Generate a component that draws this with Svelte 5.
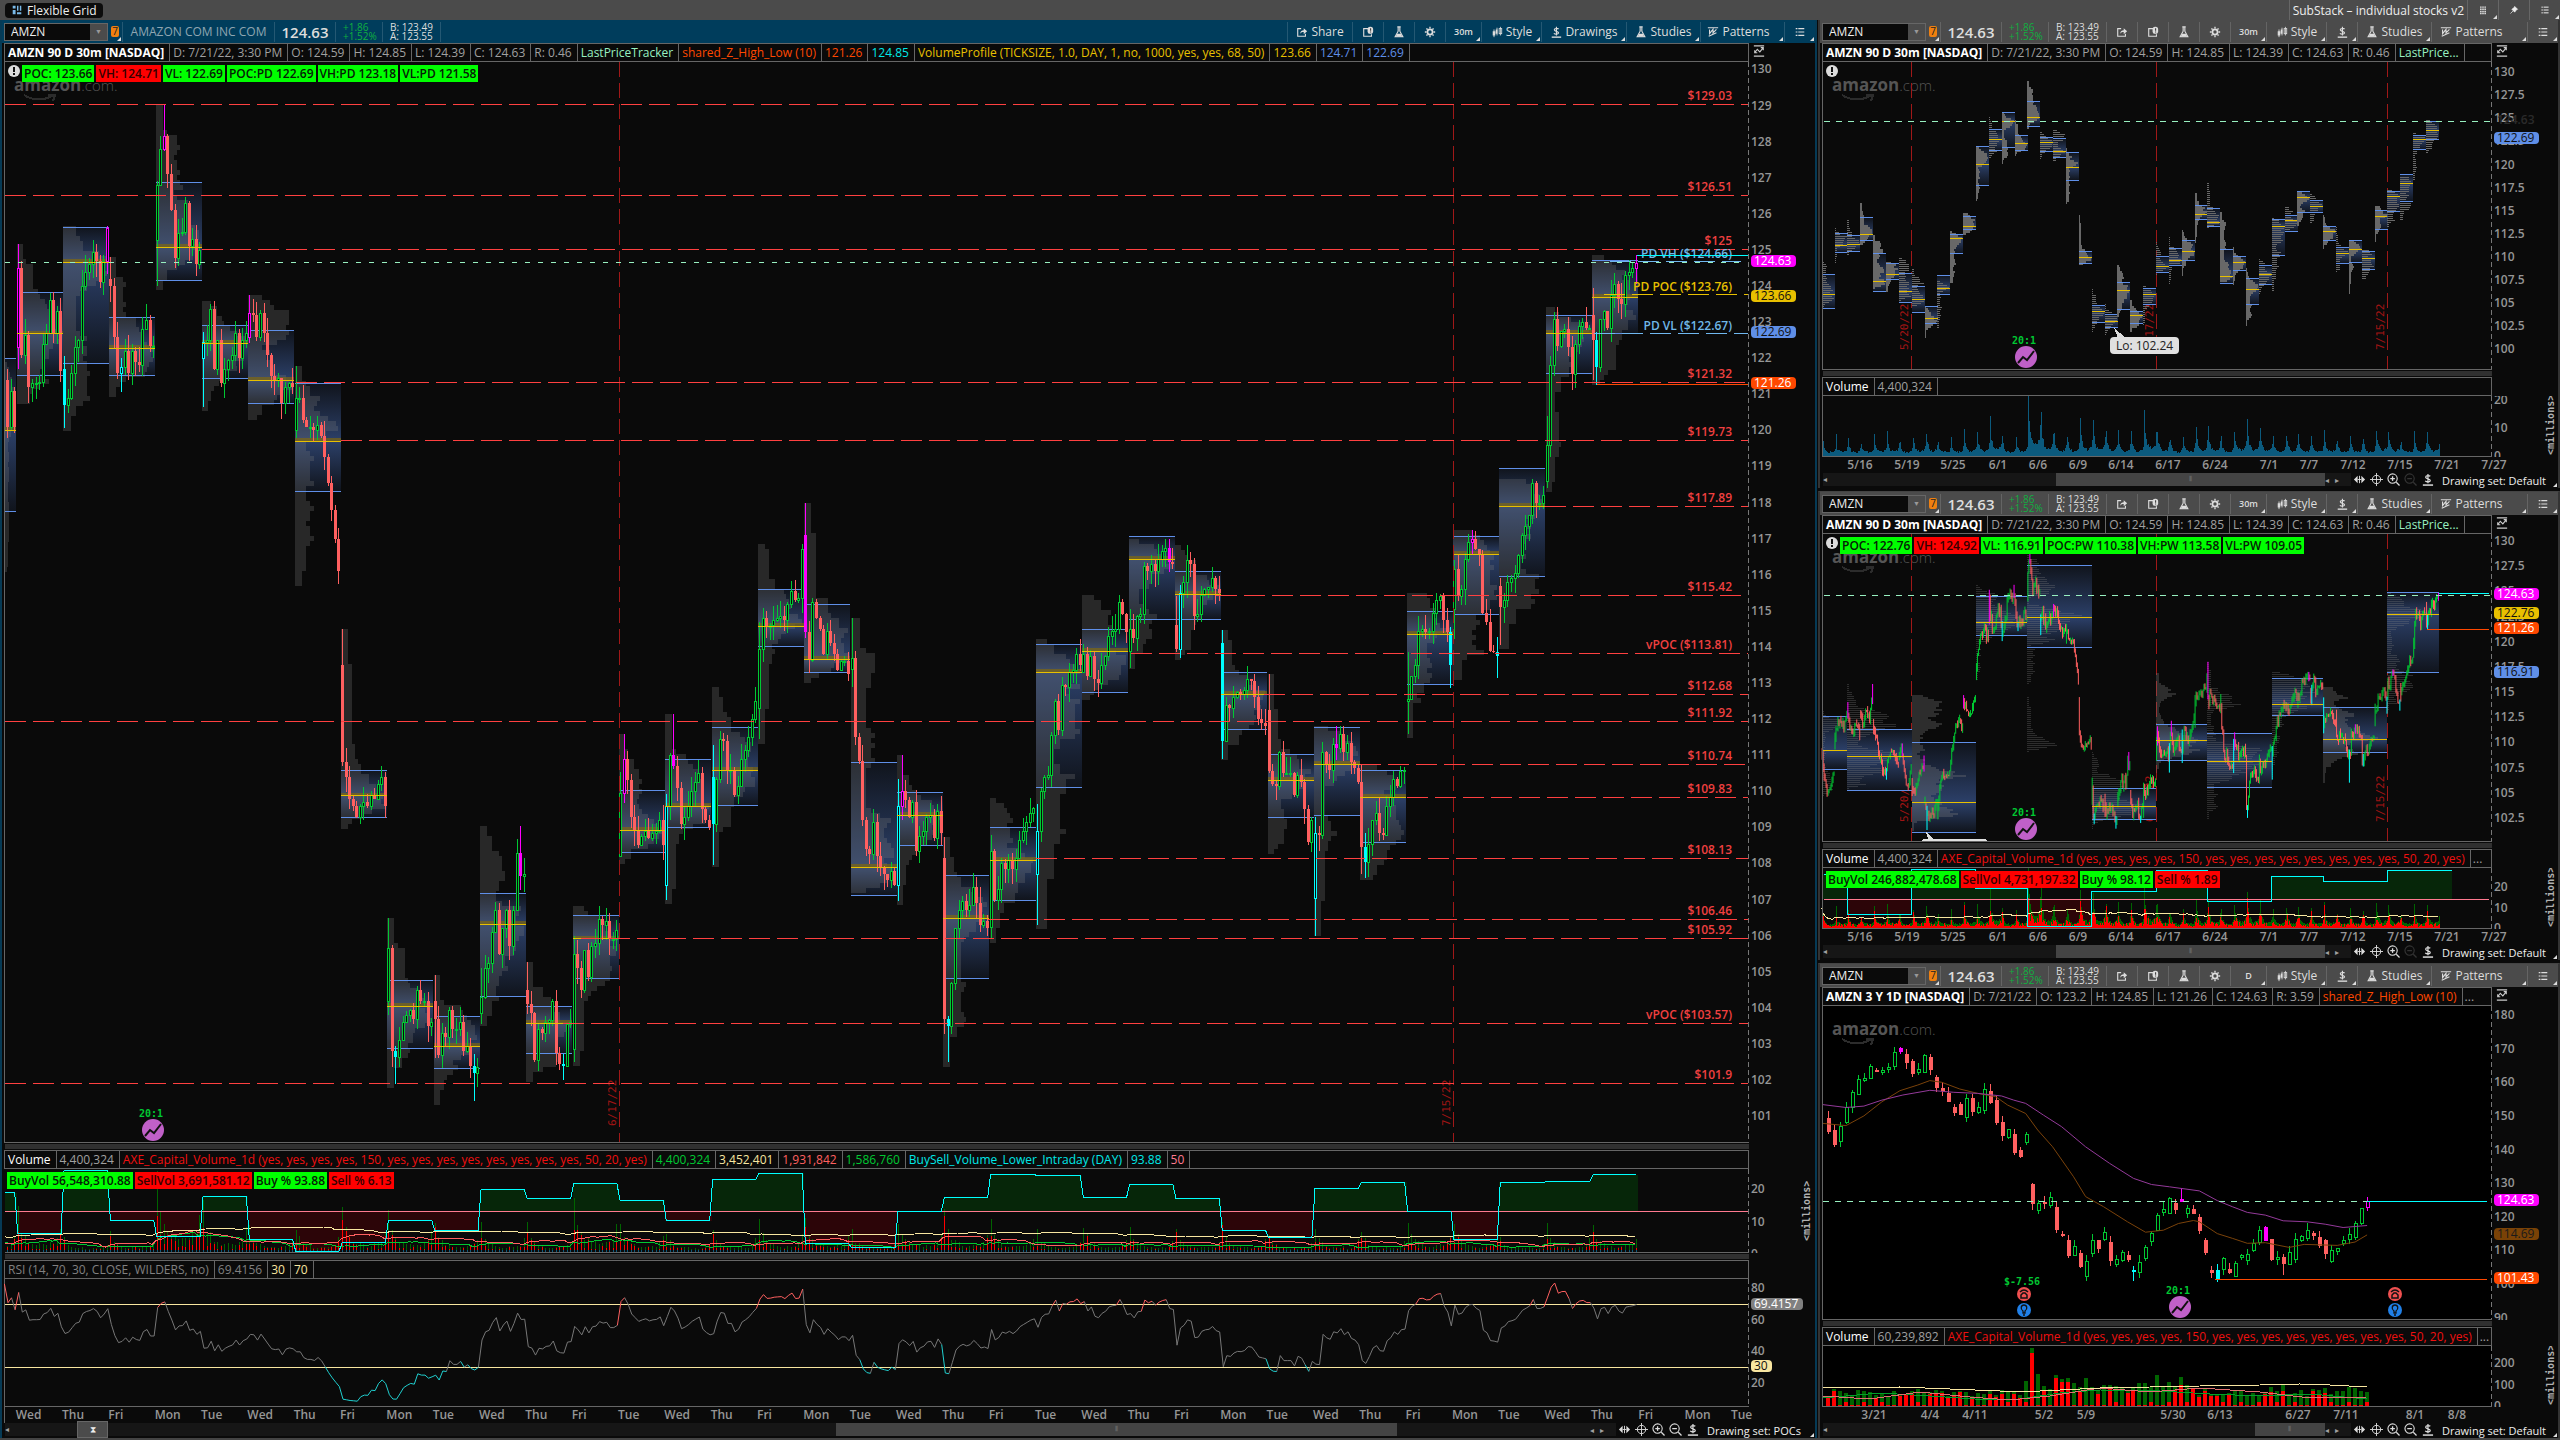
<script lang="ts">
  type Candle = { o: number; c: number; h: number; l: number; kind: string; vol: number; red: number };
  type Day = { label: string; vh: number; vl: number; poc: number; candles: Candle[] };
  type Scale = (_v: number) => number;

  const UP = '#00c832';
  const DOWN = '#ff6060';
  const HIGH = '#ff00ff';
  const LOW = '#00ffff';
  const FIRST_EXPIRY = 26;
  const FIRST_MAIN = 12;

  let seed = 7;
  function rnd(): number {
    seed = (seed * 16807) % 2147483647;
    return seed / 2147483647;
  }

  // label, value high, value low, point of control, opening volume, prices,
  // then swing high [bar, price] and swing low [bar, price]
  const raw: any[] = [
    ['Thu', 108.1, 104.4, 105.9, 5, [109.5, 106.5, 104.8, 105.5, 107]],
    ['Fri', 112.5, 110.5, 111.2, 7, [109.5, 111.8, 112.4, 111.5, 113]],
    ['Mon', 112.3, 110.6, 111.3, 6.7, [112.8, 111.5, 111, 111.6, 110.9], [0, 114]],
    ['Tue', 114.2, 111.8, 112.4, 5, [113.5, 111.8, 113.3, 112.2, 115.3], [12, 115.8]],
    ['Wed', 110.3, 106.2, 107.3, 7.3, [112, 110.8, 108.8, 107.4, 107.2]],
    ['Thu', 109.3, 107.5, 108.1, 8.2, [106.8, 108.5, 109.2, 108.2, 107.6], null, [0, 106.3]],
    ['Fri', 108.2, 105, 106.2, 5, [108.8, 109.3, 106.5, 105.4, 107.6], [3, 109.9]],
    ['Mon', 106.8, 104, 105.4, 8.2, [105.8, 104.8, 106, 107.5, 107.4], [12, 108.7]],
    ['Tue', 104.6, 102.8, 103.3, 9.5, [104.2, 102.4, 103, 102.9, 104.2], null, [2, 101.3]],
    ['Wed', 108, 105.9, 106.6, 5.2, [103, 105.6, 107, 106.5, 106.9]],
    ['Thu', 112.4, 110.3, 112, 6.4, [107.5, 110, 112, 112.4, 111.2]],
    ['Fri', 114.4, 112.9, 113.3, 8.2, [113.8, 113.5, 113, 113.3, 115.2], [0, 114.7]],
    ['Tue', 122, 117.76, 120, 8.5, [116.3, 117.4, 118.6, 119.2, 119.9, 120.6, 121, 120.4, 121.2, 121.6, 121.4, 120.1, 121.1, 120.1]],
    ['Wed', 123.83, 121.53, 122.68, 12.8, [122.3, 124.5, 122.1, 122.65, 121.2, 121.3, 121.3, 121.35, 122.4, 122.7, 123.6, 122.7, 123.3, 121.65], [0, 125.16]],
    ['Thu', 125.63, 121.86, 124.66, 5.6, [121.7, 120.7, 120.9, 121.6, 122.3, 122.5, 124, 124.4, 124.6, 124.95, 124.7, 124.1, 124.7, 125.6], [12, 125.65], [0, 120.06]],
    ['Fri', 123.13, 121.53, 122.27, 7.3, [124.2, 124, 122.6, 121.6, 121.75, 122.2, 121.6, 122.2, 121.9, 121.8, 122.8, 123.05, 122.35, 122.35], null, [3, 121.05]],
    ['Mon', 126.87, 124.16, 125.07, 21.5, [125.27, 126.8, 127.8, 128.15, 127.1, 126.1, 124.77, 125.46, 125.5, 126.3, 125.1, 125.3, 124.6, 125], [2, 129.03]],
    ['Tue', 122.91, 121.44, 122.41, 13.5, [122, 122.45, 122.5, 123.35, 121.7, 122.5, 121.3, 121.7, 121.95, 122.1, 122.7, 122, 122.5, 122.7], null, [0, 120.66]],
    ['Wed', 122.77, 120.75, 121.39, 8, [122.6, 123.25, 123.2, 122.6, 123.25, 122.7, 122.1, 121.5, 121.4, 121.45, 120.75, 121.2, 121.3, 121.2], [0, 123.75]],
    ['Thu', 121.3, 118.31, 119.7, 8.7, [120, 120.9, 120.9, 120.3, 120.1, 120.1, 120, 120.15, 119.85, 119.25, 118.55, 117.8, 117, 116.1]],
    ['Fri', 110.58, 109.28, 109.88, 12, [113.5, 110.8, 110.4, 109.8, 109.6, 109.3, 109.6, 109.7, 109.6, 109.9, 109.8, 110.2, 110.4, 109.6]],
    ['Mon', 104.76, 102.88, 104.04, 12, [104.2, 105.65, 102.8, 102.65, 103.1, 103.6, 103.8, 103.95, 103.7, 104.5, 104.2, 104.2, 103.5, 103.6], null, [2, 101.9]],
    ['Tue', 103.76, 102.32, 102.93, 9.5, [104.2, 103.7, 102.7, 103.3, 103.2, 103.95, 103.4, 103.4, 103.6, 102.8, 102.95, 102.4, 102.2, 102.35], null, [11, 101.43]],
    ['Wed', 107.17, 104.32, 106.31, 8, [103.85, 104.3, 105.1, 105.25, 106.1, 106.7, 105.5, 106.2, 106.7, 105.7, 106.7, 108.3, 107.65, 107.7], [11, 109.05]],
    ['Thu', 104.04, 102.74, 103.57, 8.2, [104.5, 104.1, 103.85, 102.55, 103.4, 103.3, 103.6, 103.65, 104.2, 102.75, 102.45, 102.4, 103.55, 103.6], null, [10, 102]],
    ['Fri', 106.56, 104.82, 105.92, 15.5, [102.85, 105.5, 105.1, 104.5, 105.6, 104.85, 105.7, 105.8, 106.45, 106.3, 106.4, 105.9, 105.9, 106.15]],
    ['Tue', 110.03, 108.31, 108.92, 9.5, [108.2, 109.95, 110.9, 110.3, 109.3, 108.9, 108.5, 108.75, 108.9, 108.7, 108.85, 108.9, 109.2, 108.5], [1, 111.6]],
    ['Wed', 110.89, 109, 109.58, 6.5, [107.4, 109.6, 111, 110.7, 110.1, 109.1, 109.3, 109.6, 110, 110.25, 110.5, 109.5, 109.2, 109], [2, 112.15], [0, 107]],
    ['Thu', 111.77, 109.61, 110.58, 8, [110.4, 109.1, 110.35, 111.45, 111.4, 110.6, 110.6, 109.9, 110.15, 110.9, 111.15, 111.5, 112, 112.5], null, [0, 107.95]],
    ['Fri', 115.6, 114.02, 114.57, 9.5, [112.3, 113.95, 114.8, 114.55, 114.6, 114.75, 114.8, 114.85, 114.75, 115.2, 115.55, 115.3, 115.35, 116.7]],
    ['Mon', 115.18, 113.3, 113.66, 9.5, [117.1, 114.4, 113.65, 115.25, 114.8, 114.5, 113.8, 114.45, 114.1, 113.8, 113.35, 113.6, 113.6, 113.25], [0, 118]],
    ['Tue', 110.8, 107.12, 107.89, 6.8, [113.4, 113.7, 111.5, 110.85, 109.2, 108.4, 108.25, 109.15, 108.2, 107.9, 107.7, 107.55, 107.8, 107.4]],
    ['Wed', 109.97, 108.5, 109.33, 10.7, [107.4, 109.6, 110, 109.75, 109.3, 109.7, 108.35, 108.75, 108.9, 109.3, 109.35, 108.7, 109.45, 108.85], [1, 111], [0, 106.95]],
    ['Thu', 107.67, 104.82, 106.48, 11.3, [108.15, 103.7, 103.5, 104.7, 106.2, 106.7, 106.95, 106.7, 106.85, 107.35, 106.9, 106.3, 106.4, 106.2], null, [1, 102.5]],
    ['Fri', 109, 106.98, 108.09, 9, [106.25, 108.35, 107, 107.3, 108, 107.85, 108.1, 107.85, 108.15, 108.65, 108.9, 109.15, 109.4, 109.55]],
    ['Tue', 114.07, 110.11, 113.3, 7.6, [107.7, 108.9, 110, 110.4, 110.45, 111.55, 112.5, 111.7, 112.95, 112.9, 113.3, 113.35, 113.8, 113.5], null, [0, 106.3]],
    ['Wed', 114.49, 112.74, 113.88, 9, [113.3, 113.8, 113.2, 113.75, 113.1, 113, 113.5, 113.75, 114.3, 114.45, 114.5, 115.25, 114.9, 114.4]],
    ['Thu', 117.06, 114.76, 116.43, 7.6, [113.9, 114.5, 114.25, 114.85, 114.9, 116.25, 116.1, 116.3, 116.1, 116.45, 116.65, 116.75, 116.35, 116.3], [11, 117]],
    ['Fri', 116.09, 114.76, 115.46, 6.8, [114.6, 113.95, 115.5, 115.8, 116.4, 116.3, 114.85, 114.9, 115.45, 115.6, 115.65, 115.9, 115.6, 115.5], null, [1, 113.7]],
    ['Mon', 113.3, 111.72, 112.69, 8, [114.1, 111.4, 112.4, 112.3, 112.6, 112.75, 112.7, 112.8, 113.1, 113.05, 112.6, 112, 111.9, 111.8], null, [0, 110.9]],
    ['Tue', 111.02, 109.28, 110.3, 5.8, [112.25, 110.55, 110.2, 110.15, 111.1, 110.5, 110.5, 110.5, 109.9, 110.45, 110.25, 109.5, 108.6, 109.2]],
    ['Wed', 111.77, 109.33, 110.75, 7.6, [107.05, 108.85, 108.8, 111.1, 110.75, 110.6, 111.3, 111.2, 111.6, 111.1, 111.35, 110.8, 110.65, 110.25], [6, 111.8], [0, 106]],
    ['Thu', 110.58, 108.59, 109.83, 6.8, [110.25, 108.45, 108.05, 108.55, 109.2, 109.4, 108.85, 108.8, 109.6, 109.85, 110.35, 110.15, 110.55, 110.6], null, [1, 107.6]],
    ['Fri', 114.99, 112.96, 114.35, 11, [112.5, 112.55, 113.2, 113.5, 114.45, 114.5, 114.4, 114.45, 114.95, 115.3, 115.4, 114.75, 114.4, 113.5], null, [12, 112.85]],
    ['Mon', 117.06, 114.9, 116.57, 9.5, [115.05, 116.15, 115.4, 115.6, 116.45, 116.9, 116.98, 116.7, 116.55, 114.95, 114.7, 113.9, 113.85, 113.75], [5, 117.25], [12, 113.15]],
    ['Tue', 118.95, 115.96, 117.9, 5.2, [115.7, 115.1, 115.3, 115.8, 115.9, 116.05, 116.55, 117.1, 117.35, 117.65, 118.55, 118, 118, 118.2]],
    ['Wed', 123.19, 121.58, 122.69, 8, [118.6, 119.6, 121.8, 123.1, 122.35, 122.75, 122.8, 122.3, 121.55, 122.4, 122.9, 123, 122.85, 122.85]],
    ['Thu', 124.71, 122.69, 123.69, 9, [123.2, 122.5, 121.75, 123.1, 123.3, 122.85, 123.75, 124.05, 123.65, 123.5, 124.3, 124.4, 124.5, 124.65], [12, 124.85], [1, 121.26]]
  ];

  // opening bars with a long range: day -> [high, low]
  const openingRange: Record<number, [number, number]> = {
    16: [126.9, 124], 20: [114.5, 110.7], 21: [106.5, 103.8], 22: [104.9, 102.6], 23: [105.1, 103.55], 25: [106, 102.5],
    29: [114.7, 111.45], 31: [114.8, 112.9], 34: [108.8, 105.9], 40: [113.25, 110.5], 43: [113.85, 111.6],
    45: [115.9, 114.05], 46: [120.4, 118.4], 47: [123.95, 121.4]
  };

  function expand(points: number[]): number[] {
    if (points.length === 14) return points;
    const out: number[] = [];
    for (let i = 0; i < 14; i++) {
      const t = (i / 13) * (points.length - 1);
      const k = Math.min(Math.floor(t), points.length - 2);
      out.push(points[k] + (points[k + 1] - points[k]) * (t - k) + (rnd() - 0.5) * 0.8);
    }
    return out;
  }

  const days: Day[] = raw.map(([label, vh, vl, poc, peak, pts, hi, lo], day) => {
    const p = expand(pts);
    const candles = p.slice(1).map((c, i) => {
      const o = p[i];
      const amp = i === 0 ? 0.9 : 0.45;
      let h = Math.max(o, c) + rnd() * amp;
      let l = Math.min(o, c) - rnd() * amp;
      let kind = c >= o ? 'up' : 'down';
      if (hi && hi[0] === i) { kind = 'high'; h = hi[1]; }
      if (lo && lo[0] === i) { kind = 'low'; l = lo[1]; }
      if (hi) h = Math.min(h, hi[1]);
      if (lo) l = Math.max(l, lo[1]);
      if (i === 0 && openingRange[day]) [h, l] = openingRange[day];
      const curve = [1, 0.55, 0.4, 0.3, 0.26, 0.22, 0.2, 0.18, 0.2, 0.22, 0.24, 0.3, 0.5][i];
      const vol = Math.max(peak * curve * (0.8 + rnd() * 0.4), 1 + rnd());
      const red = vol * (c < o ? 0.7 + rnd() * 0.2 : 0.3 + rnd() * 0.2);
      return { o, c, h, l, kind, vol, red };
    });
    return { label, vh, vl, poc, candles };
  });

  const mainX = (i: number) => 619 + (i - FIRST_EXPIRY) * 46.33;
  const sideX = (i: number) => 2156 + (i - FIRST_EXPIRY) * 12.86;
  const mainY: Scale = (p) => 104.5 + (129.03 - p) * 36.09;
  const dayY: Scale = (p) => 72.3 + (130 - p) * 9.22;
  const weekY: Scale = (p) => 541 + (130 - p) * 10.07;
  const dailyY: Scale = (p) => 1015 + (180 - p) * 3.363;

  function box(x0: number, x1: number, y0: number, y1: number): string {
    return `M${x0} ${y0}H${x1}V${y1}H${x0}Z`;
  }

  function profile(list: Candle[], x: number, w: number, y: Scale, bin: number, gap: number, power: number): string {
    const top = Math.min(...list.map((k) => y(k.h)));
    const bottom = Math.max(...list.map((k) => y(k.l)));
    const rows: [number, number][] = [];
    for (let v = top; v < bottom; v += bin) {
      let n = 0;
      for (const k of list) {
        if (y(k.h) < v + bin && y(k.l) > v) n += 1;
        if (y(Math.max(k.o, k.c)) < v + bin && y(Math.min(k.o, k.c)) > v) n += 1;
      }
      rows.push([v, n]);
    }
    const max = Math.max(...rows.map((r) => r[1]));
    return rows.filter((r) => r[1] > 0).map(([v, n]) => box(x, x + (n / max) ** power * w, v, v + bin - gap)).join('');
  }

  const mainDays = days.map((d, i) => ({ ...d, i, x: mainX(i) })).slice(FIRST_MAIN);
  const sideDays = days.map((d, i) => ({ ...d, i, x: sideX(i) }));

  const weeks = [
    { from: 0, to: 2, vh: 112.6, vl: 107.3, poc: 109.2, pct: 94 },
    { from: 2, to: 7, vh: 111.3, vl: 105.2, poc: 108.6, pct: 23 },
    { from: 7, to: 12, vh: 110, vl: 101.1, poc: 104, pct: 102 },
    { from: 12, to: 16, vh: 124.5, vl: 120.6, poc: 121.9, pct: 68 },
    { from: 16, to: 21, vh: 127.6, vl: 119.4, poc: 122.4, pct: 1 },
    { from: 21, to: 26, vh: 105.4, vl: 102.3, poc: 103.6, pct: 64 },
    { from: 26, to: 30, vh: 111.8, vl: 108.2, poc: 110.2, pct: 101 },
    { from: 30, to: 35, vh: 110.9, vl: 105.5, poc: 108.1, pct: 46 },
    { from: 35, to: 39, vh: 116.3, vl: 112.7, poc: 113.8, pct: 89 },
    { from: 39, to: 44, vh: 113.5, vl: 109, poc: 110.3, pct: 80 },
    { from: 44, to: 48, vh: 124.9, vl: 116.9, poc: 122.7, pct: 101 }
  ];

  const kinds: [string, string][] = [['up', UP], ['down', DOWN], ['high', HIGH], ['low', LOW]];

  const mainCandles = kinds.map(([kind, color]) => {
    let wick = '';
    let solid = '';
    let hollow = '';
    for (const d of mainDays) {
      d.candles.forEach((k, n) => {
        const x = Math.round(d.x + 1 + n * 3.56);
        if (k.kind !== kind || x < 5) return;
        const top = Math.round(mainY(Math.max(k.o, k.c)));
        const bottom = Math.max(Math.round(mainY(Math.min(k.o, k.c))), top + 1);
        wick += `M${x + 0.5} ${mainY(k.h)}V${top}M${x + 0.5} ${bottom}V${mainY(k.l)}`;
        if (k.c >= k.o) hollow += box(x - 0.5, x + 1.5, top + 0.5, bottom + 0.5);
        else solid += box(x - 1, x + 2, top, bottom);
      });
    }
    return { color, wick, solid, hollow };
  });

  const weekCandles = kinds.map(([kind, color]) => ({
    color,
    d: days.map((day, i) => day.candles.map((k, n) => {
      if (k.kind !== kind) return '';
      return `M${sideX(i) + 0.5 + n * 0.99} ${weekY(k.h)}V${weekY(k.l)}`;
    }).join('')).join('')
  }));

  function volumeBars(xOf: (_i: number) => number, pitch: number, base: number, unit: number, pick: (_k: Candle) => number, from = 0): string {
    return days.map((d, i) => i < from ? '' : d.candles.map((k, n) =>
      `M${Math.round(xOf(i) + 1 + n * pitch) + 0.5} ${base}v${-pick(k) * unit}`).join('')).join('');
  }

  const flat = days.flatMap((d) => d.candles);

  function average(values: number[], n: number): number[] {
    return values.map((_, i) => {
      const part = values.slice(Math.max(0, i - n + 1), i + 1);
      return part.reduce((a, b) => a + b, 0) / part.length;
    });
  }

  function averageLine(values: number[], n: number, xOf: (_i: number) => number, pitch: number, base: number, unit: number): string {
    return average(values, n).map((v, i) => `${(xOf(Math.floor(i / 13)) + (i % 13) * pitch).toFixed(1)},${(base - v * unit).toFixed(1)}`).join(' ');
  }

  const greenVol = flat.map((k) => k.vol - k.red);
  const redVol = flat.map((k) => k.red);
  const allVol = flat.map((k) => k.vol);

  const dayPct = [72, 23, 99, 39, 19, 68, 15, 1, 11, 39, 26, 76, 65, 83, 63, 38, 89, 96, 10, 5, 50, 66, 95, 93, 67, 82, 65, 26, 18, 77, 85, 50, 15, 85, 86, 94];
  const pctY: Scale = (p) => 1211 - (p - 50) * 0.82;
  const weekPctY: Scale = (p) => 899 - (p - 50) * 0.567;
  const pctLine = dayPct.map((p, n) => `${n ? mainX(n + FIRST_MAIN) + 1 : 5},${pctY(p)} ${mainX(n + FIRST_MAIN + 1) - 2},${pctY(p)}`).join(' ');
  const weekPctLine = weeks.map((w, n) => `${n ? sideX(w.from) : 1824},${weekPctY(w.pct)} ${w.to === 48 ? 2452 : sideX(w.to)},${weekPctY(w.pct)}`).join(' ');

  // Wilder's smoothing over 14 bars
  function rsi(closes: number[]): number[] {
    let gain = 0.05;
    let loss = 0.05;
    return closes.map((c, i) => {
      const diff = i ? c - closes[i - 1] : 0;
      gain = (gain * 13 + Math.max(diff, 0)) / 14;
      loss = (loss * 13 + Math.max(-diff, 0)) / 14;
      return 100 - 100 / (1 + gain / loss);
    });
  }

  const rsiY: Scale = (v) => 1304 + (70 - v) * 1.575;
  const rsiValues = rsi(flat.map((k) => k.c));
  const rsiPaths = [['#777', 30, 70], ['#ff6060', 70, 101], ['#20d0d0', -1, 30]].map(([color, lo, hi]) => {
    let d = '';
    for (let i = FIRST_MAIN * 13 + 10; i < flat.length; i++) {
      const v = rsiValues[i];
      if (v < +lo || v >= +hi) continue;
      const x = (n: number) => mainX(Math.floor(n / 13)) + (n % 13) * 3.56 + 2;
      d += `M${x(i - 1).toFixed(1)} ${rsiY(rsiValues[i - 1]).toFixed(1)}L${x(i).toFixed(1)} ${rsiY(v).toFixed(1)}`;
    }
    return { color, d };
  });

  const levels = [
    [129.03, 5], [126.51, 5], [125, 202], [121.32, 296], [119.73, 341], [117.89, 1545], [115.42, 1216],
    [113.81, 1131, 'v'], [112.68, 1264], [111.92, 5], [110.74, 1360], [109.83, 1407], [108.13, 1036],
    [106.46, 988], [105.92, 581], [103.57, 563, 'v'], [101.9, 5]
  ].map(([price, x, v]) => ({ x: +x, y: Math.floor(mainY(+price)), text: v ? `vPOC ($${price})` : `$${price}` }));

  const dailyRaw = [
    [149.4, 145.3], [145.8, 141.3], [142.6, 147.1], [148.2, 152.7], [152.7, 157], [156.6, 161.1], [160.8, 161.4],
    [161.4, 164.7], [163.6, 163.2], [163.3, 163.5], [163.8, 164.5], [164.7, 168.9], [170.1, 169.1], [168.4, 165.6],
    [166.2, 162.4], [163.1, 163.9], [163.1, 168.1], [167.5, 163.6], [161.5, 158.3], [158.3, 157.5], [156.7, 154.1],
    [152.6, 150.9], [153.5, 150.3], [149.8, 155.2], [155.2, 151.1], [151.2, 152.5], [151.8, 158], [157.4, 153.7],
    [154.7, 148], [148.2, 144], [143.6, 146], [144.7, 139], [140, 137.9], [142.1, 144.5], [129.6, 123.8],
    [122.1, 124.2], [124.3, 124.1], [123.4, 125.8], [123, 116], [114.9, 114.8], [113, 108.4], [108.7, 111.3],
    [109.3, 105.2], [102.5, 106.9], [109.1, 113], [113, 110.5], [113.5, 115.5], [112.5, 106.9], [106.1, 107.5],
    [107.2, 109.6], [108.6, 107.2], [104.2, 103.7], [103.5, 106.7], [107.8, 111.1], [112.8, 115.2], [116.2, 120.4],
    [121.5, 122.3], [121.2, 125.5], [124.2, 122.1], [125.3, 124.3], [121.2, 122.6], [122.4, 120.9], [119.8, 115.9],
    [113.1, 109.3], [104.2, 103.2], [104.2, 101.6], [104.4, 107.6], [104.4, 103.4], [102.5, 106.3], [108.3, 108.6],
    [107.2, 108.9], [110, 112.3], [112.4, 116.2], [117, 112.8], [113.3, 107.1], [107.4, 108], [108.1, 106.1],
    [106.1, 109.5], [107.3, 113.3], [113.1, 114.3], [113.7, 116.2], [115.2, 114.4], [114, 111.4], [113.2, 109],
    [106.9, 110.1], [109.8, 110.7], [112.1, 113.1], [113.5, 114.9], [114.1, 118.2], [118.2, 122.6], [122.8, 124.6]
  ];
  const marks: Record<number, string> = { 12: HIGH, 59: HIGH, 73: HIGH, 90: HIGH, 51: LOW, 65: LOW };
  const bigVolume: Record<number, number> = { 33: 25, 34: 58, 35: 32, 38: 31, 39: 27, 40: 28, 43: 28, 55: 31, 59: 29, 76: 21 };
  const wickOverride: Record<number, [number, number]> = { 59: [128.7, 124.3], 51: [105.5, 101], 76: [109, 102.6] };

  const daily = dailyRaw.map(([o, c], i) => {
    const x = 1828 + i * 5.99;
    const h = wickOverride[i]?.[0] ?? Math.max(o, c) + rnd() * 2;
    const l = wickOverride[i]?.[1] ?? Math.min(o, c) - rnd() * 1.8;
    const vol = bigVolume[i] ?? (i > 34 && i < 62 ? 15 : 10) + rnd() * 9;
    const red = c < o ? vol * (0.72 + rnd() * 0.2) : i % 3 ? 1 : 4;
    return {
      x: Math.round(x), o, c, vol, red,
      top: Math.round(dailyY(Math.max(o, c))),
      bottom: Math.max(Math.round(dailyY(Math.min(o, c))), Math.round(dailyY(Math.max(o, c))) + 2),
      h: dailyY(h), l: dailyY(l),
      color: marks[i] ?? (c >= o ? UP : DOWN)
    };
  });

  function curve(points: number[][]): string {
    return points.map(([i, p]) => `${(1828 + i * 5.99).toFixed(1)},${dailyY(p).toFixed(1)}`).join(' ');
  }

  const fastAverage = curve([[-1, 147.8], [3, 147.1], [6, 150], [9, 154.2], [12, 157.5], [15, 159.2], [17, 160.5], [19, 160], [22, 158], [25, 156.7], [28, 155.7], [30, 153.2], [33, 150.7], [35, 145.8], [37.5, 140.8], [41, 131.9], [43, 126], [46, 123], [50, 118.5], [53, 115.4], [56, 116], [58.5, 118], [61, 118.9], [62, 118.5], [65, 115], [67.5, 113.6], [70, 112.1], [73, 112.3], [77, 110.9], [79.5, 111.8], [83, 111.6], [85, 111.5], [88, 112.5], [90, 114.6]]);
  const slowAverage = curve([[-1, 153.4], [3, 152.5], [6, 152.9], [9, 154.7], [12.5, 156.2], [17, 157.6], [21, 157], [25, 156.7], [29, 155.9], [31, 154.7], [33, 153.7], [36, 150.2], [39, 146.8], [43, 140.8], [47, 135.9], [51, 131.4], [54, 129.6], [57, 128.9], [62, 127.7], [65, 124.8], [67.5, 123], [70, 121.3], [73, 120.5], [76, 118.8], [80, 118.5], [83, 117.8], [86, 116.8], [90, 117.4]]);

  const sideDates: [string, number][] = [['5/16', 1860], ['5/19', 1907], ['5/25', 1953], ['6/1', 1998], ['6/6', 2038], ['6/9', 2078], ['6/14', 2121], ['6/17', 2168], ['6/24', 2215], ['7/1', 2269], ['7/7', 2309], ['7/12', 2353], ['7/15', 2400], ['7/21', 2447], ['7/27', 2494]];
  const dailyDates: [string, number][] = [['3/21', 1874], ['4/4', 1930], ['4/11', 1975], ['5/2', 2044], ['5/9', 2086], ['5/30', 2173], ['6/13', 2220], ['6/27', 2298], ['7/11', 2346], ['8/1', 2415], ['8/8', 2457]];
  const mainDates: [string, number][] = [...mainDays.slice(1).map((d): [string, number] => [d.label, d.x - 1]), ['Fri', mainX(48)], ['Mon', mainX(49)], ['Tue', mainX(50)]];

  const axe = 'AXE_Capital_Volume_1d (yes, yes, yes, yes, 150, yes, yes, yes, yes, yes, yes, yes, yes, 50, 20, yes)';
  const quote: [string, string][] = [['D: 7/21/22, 3:30 PM', ''], ['O: 124.59', ''], ['H: 124.85', ''], ['L: 124.39', ''], ['C: 124.63', ''], ['R: 0.46', '']];
  const sideHeader: [string, string][] = [['AMZN 90 D 30m [NASDAQ]', 'title'], ...quote, ['LastPrice...', 'mint']];
  const mainHeader: [string, string][] = [
    ['AMZN 90 D 30m [NASDAQ]', 'title'], ...quote, ['LastPriceTracker', 'mint'], ['shared_Z_High_Low (10)', 'orange'],
    ['121.26', 'orange'], ['124.85', 'cyan'], ['VolumeProfile (TICKSIZE, 1.0, DAY, 1, no, 1000, yes, yes, 68, 50)', 'gold'],
    ['123.66', 'gold'], ['124.71', 'blue'], ['122.69', 'blue']
  ];
  const dailyHeader: [string, string][] = [
    ['AMZN 3 Y 1D [NASDAQ]', 'title'], ['D: 7/21/22', ''], ['O: 123.2', ''], ['H: 124.85', ''], ['L: 121.26', ''],
    ['C: 124.63', ''], ['R: 3.59', ''], ['shared_Z_High_Low (10)', 'orange'], ['...', 'more']
  ];
  const mainVolume: [string, string][] = [
    ['Volume', 'white'], ['4,400,324', ''], [axe, 'red'], ['4,400,324', 'green'], ['3,452,401', 'cream'], ['1,931,842', 'coral'],
    ['1,586,760', 'green'], ['BuySell_Volume_Lower_Intraday (DAY)', 'cyan'], ['93.88', 'cyan'], ['50', 'pink']
  ];
  const rsiHeader: [string, string][] = [['RSI (14, 70, 30, CLOSE, WILDERS, no)', 'dim'], ['69.4156', 'dim'], ['30', 'cream'], ['70', 'cream']];

  function range(from: number, to: number, step: number): number[] {
    const out: number[] = [];
    for (let v = from; v >= to; v -= step) out.push(v);
    return out;
  }
</script>

{#snippet icon(name: string)}
  <svg class="icon" viewBox="0 0 14 14" width="14" height="14" aria-hidden="true">
    {#if name === 'share'}
      <path d="M6 3H2v9h9V9" fill="none" stroke="currentColor" stroke-width="1.300" />
      <path d="M5 9c0-3 2-4 4-4V2.500l4 3.500-4 3.500V7C7 7 6 7.500 5 9z" fill="currentColor" />
    {:else if name === 'news'}
      <path d="M7 3H2v9h9V9.500" fill="none" stroke="currentColor" stroke-width="1.300" />
      <rect x="6.500" y="1" width="6.500" height="8" rx="3" fill="currentColor" /><path d="M10 2.500v3M10 6.500v1.200" stroke="#444" stroke-width="1.300" />
    {:else if name === 'flask'}
      <path d="M5 1h4M6 1v5l-3.500 6.500h9L8 6V1" fill="none" stroke="currentColor" stroke-width="1.300" /><path d="M5 9h4l2 3.500H3z" fill="currentColor" />
    {:else if name === 'gear'}
      <circle cx="7" cy="7" r="3" fill="none" stroke="currentColor" stroke-width="2" />
      <path d="M7 1v2M7 11v2M1 7h2M11 7h2M2.800 2.800l1.400 1.400M9.800 9.800l1.400 1.400M11.200 2.800L9.800 4.200M4.200 9.800l-1.400 1.400" stroke="currentColor" stroke-width="1.600" />
    {:else if name === 'style'}
      <path d="M3.500 4v9M7 2v9M11 1v10" stroke="currentColor" stroke-width="1" /><path d="M2 6h3v5H2zM5.500 4h2v5h-2z" fill="currentColor" /><rect x="9.500" y="3" width="3" height="6" fill="none" stroke="currentColor" />
    {:else if name === 'dollar'}
      <path d="M10 3.500C9 2.500 5 2.500 5 4.500S10 6 10 8 6 10 4.500 8.500M7.500 1v10" fill="none" stroke="currentColor" stroke-width="1.300" /><path d="M2 13h11" stroke="currentColor" stroke-width="1.600" />
    {:else if name === 'patterns'}
      <path d="M1 2h12M2 12l9-4M3 4v5l4-5v4l4-4" fill="none" stroke="currentColor" stroke-width="1.300" />
    {:else if name === 'list'}
      <path d="M2 3h2M5 3h7M2 7h2M5 7h7M2 11h2M5 11h7" stroke="currentColor" stroke-width="1.400" />
    {:else if name === 'dots'}
      <path d="M3 3h8M3 6h8M3 9h8M3 12h8" stroke="currentColor" stroke-width="2" stroke-dasharray="2 1" />
    {:else if name === 'pin'}
      <path d="M8 2l4 4-2 1-2 3-4-4 3-2zM5.500 8.500L2 12" fill="currentColor" stroke="currentColor" />
    {:else if name === 'grid'}
      <path d="M1 1h4v4H1zM1 7h4v6H1zM7 1h2v7H7zM11 1h2v7h-2zM7 10h6v3H7z" fill="#79b9e8" />
    {:else if name === 'spread'}
      <path d="M1 7l4-4v8zM13 7L9 3v8z" fill="currentColor" /><path d="M5 7h4M7 3v8" stroke="currentColor" />
    {:else if name === 'target'}
      <circle cx="7" cy="7" r="4.500" fill="none" stroke="currentColor" /><path d="M7 0v14M0 7h14" stroke="currentColor" />
    {:else if name === 'zoomin' || name === 'zoomout'}
      <circle cx="6" cy="6" r="5" fill="none" stroke="currentColor" stroke-width="1.200" /><path d="M3.500 6h5M10 10l3.500 3.500" stroke="currentColor" stroke-width="1.400" />
      {#if name === 'zoomin'}<path d="M6 3.500v5" stroke="currentColor" stroke-width="1.400" />{/if}
    {:else if name === 'scale'}
      <path d="M1 1h12M1 13h12M2 9l3-4 3 3 4-5M9 3h3v3M2 6v3h3" fill="none" stroke="currentColor" stroke-width="1.300" />
    {/if}
  </svg>
{/snippet}

{#snippet toolbar(main: boolean, period: string)}
  <div class="toolbar" class:active={main}>
    <label class="symbol">
      <select aria-label="Symbol"><option>AMZN</option></select>
      <span class="arrow">▼</span>
    </label>
    <button class="cell badge corner"><span>7</span></button>
    {#if main}<div class="cell company">AMAZON COM INC COM</div>{/if}
    <div class="cell last">124.63</div>
    <div class="cell pair gain"><span>+1.86</span><span>+1.52%</span></div>
    <div class="cell pair bid"><span>B: 123.49</span><span>A: 123.55</span></div>
    {#if main}<div class="cell filler"></div>{/if}
    <button class="cell small" class:share={main} aria-label="Share">{@render icon('share')}{#if main}Share{/if}</button>
    <button class="cell small" aria-label="Alerts">{@render icon('news')}</button>
    <button class="cell small" aria-label="Test">{@render icon('flask')}</button>
    <button class="cell small" aria-label="Settings">{@render icon('gear')}</button>
    <button class="cell period corner">{period}</button>
    <button class="cell style corner">{@render icon('style')}Style</button>
    <button class="cell small corner" class:drawings={main} aria-label="Drawings">{@render icon('dollar')}{#if main}Drawings{/if}</button>
    <button class="cell studies corner">{@render icon('flask')}Studies</button>
    <button class="cell patterns corner" class:narrow={main}>{@render icon('patterns')}Patterns</button>
    <button class="cell small corner" aria-label="Menu">{@render icon('list')}</button>
  </div>
{/snippet}

{#snippet strip(items: [string, string][], first: boolean)}
  <div class="strip-row">
    <div class="strip">
      {#each items as [text, tone]}
        <span class="field {tone}">{text}</span>
      {/each}
    </div>
    <div class="strip-axis">{#if first}{@render icon('scale')}{/if}</div>
  </div>
{/snippet}

{#snippet scrollbar(set: string, left: number, width: number, main: boolean, dimmed: boolean)}
  <div class="scroll-row">
    <div class="track">
      <span class="tip">◂</span>
      <div class="thumb" style="margin-left: {left}%; width: {width}%">⦀</div>
      {#if main}<button class="dock" aria-label="Collapse">⧗</button>{/if}
    </div>
    <div class="steps"><span>◂</span><span>▸</span></div>
    <div class="tools">
      <button aria-label="Expand">{@render icon('spread')}</button>
      <button aria-label="Crosshair">{@render icon('target')}</button>
      <button aria-label="Zoom in">{@render icon('zoomin')}</button>
      <button aria-label="Zoom out" class:dimmed>{@render icon('zoomout')}</button>
      <button aria-label="Drawing tools">{@render icon('dollar')}</button>
    </div>
    <button class="set corner" class:poc={main}>Drawing set: {set}</button>
  </div>
{/snippet}

{#snippet logo(x: number, y: number)}
  <g class="logo">
    <text {x} {y}><tspan class="heavy">amazon</tspan><tspan class="thin">.com.</tspan></text>
    <path d="M{x + 10} {y + 4}q14 9 30 0m-6 0h7l-2 6" />
  </g>
{/snippet}

{#snippet alert(x: number, y: number)}
  <circle cx={x} cy={y} r="6" fill="#ddd" shape-rendering="auto" />
  <path d="M{x} {y - 4}v5M{x} {y + 2}v2" stroke="#111" stroke-width="2" />
{/snippet}

{#snippet split(x: number, y: number)}
  <text class="event" x={x - 2} y={y - 9}>20:1</text>
  <g shape-rendering="auto">
    <circle cx={x} cy={y + 4} r="11" fill="#c060c8" />
    <path d="M{x - 8} {y + 10}l5-6 4 3 7-9" fill="none" stroke="#111" stroke-width="2" />
  </g>
{/snippet}

{#snippet tag(x: number, y: number, text: string, bg: string, fg: string)}
  <rect {x} y={y - 6} width={text.length > 6 ? 52 : text.length > 2 ? 45 : 21} height="12" rx="4" fill={bg} shape-rendering="auto" />
  <text class="tag" x={x + 3} y={y + 4} style="fill: {fg}">{text}</text>
{/snippet}

{#snippet millions(x: number, y: number)}
  <text class="millions" transform="translate({x} {y}) rotate(-90)">&lt;millions&gt;</text>
{/snippet}

{#snippet expiry(x: number, top: number, bottom: number, date: string, y: number)}
  <path d="M{x + 0.5} {top}V{bottom}" class="expiry" />
  <text class="expiry-date" transform="translate({x - 3} {y}) rotate(-90)">{date}</text>
{/snippet}

{#snippet valueArea(id: string, x: number, w: number, y: Scale, a: { vh: number; vl: number; poc: number })}
  <linearGradient {id} x1="0" x2="0" y1="0" y2="1">
    <stop offset="0" stop-color="#10141c" />
    <stop offset={(a.vh - a.poc) / (a.vh - a.vl)} stop-color="#2c4069" />
    <stop offset="1" stop-color="#10141c" />
  </linearGradient>
  <rect {x} y={y(a.vh)} width={w} height={y(a.vl) - y(a.vh)} fill="url(#{id})" />
{/snippet}

<main class="desk">
  <header class="topbar">
    <button class="layout">{@render icon('grid')}Flexible Grid</button>
    <div class="grow"></div>
    <button class="workspace">SubStack – individual stocks v2</button>
    <button class="top-icon corner" aria-label="Layouts">{@render icon('dots')}</button>
    <button class="top-icon" aria-label="Pin">{@render icon('pin')}</button>
    <button class="top-icon corner" aria-label="Menu">{@render icon('list')}</button>
  </header>

  <div class="columns">
    <section class="panel main">
      {@render toolbar(true, '30m')}
      {@render strip(mainHeader, true)}
      <div class="plot">
        <svg viewBox="2 62 1813 1081" shape-rendering="crispEdges">
          {@render alert(14, 71)}
          {@render logo(14, 91)}
          {#each mainDays as d}
            {@const x = Math.max(d.x, 5)}
            {@const w = d.x + 46 - x}
            {@render valueArea(`m${d.i}`, x, w, mainY, d)}
            <path d={profile(d.candles, x, w * 0.95, mainY, 5, 0, 0.7)} fill="#808080" fill-opacity="0.26" />
            <rect {x} y={mainY(d.poc) - 3} width={w} height="3" fill="#8a6d00" fill-opacity="0.6" />
            <path d="M{x} {mainY(d.vh)}h{w}M{x} {mainY(d.vl)}h{w}" stroke="#5f8fe8" />
          {/each}
          {#each mainCandles as k}
            <path d={k.wick} stroke={k.color} />
            <path d={k.solid} fill={k.color} />
            <path d={k.hollow} fill="#0a0a0a" stroke={k.color} />
          {/each}
          {#each mainDays as d}
            {@const x = Math.max(d.x, 5)}
            <path d="M{x} {mainY(d.poc)}H{d.x + 46}" stroke="#e8c000" />
          {/each}
          {@render expiry(619, 62, 1143, '6/17/22', 1126)}
          {@render expiry(1453, 62, 1143, '7/15/22', 1126)}
          {#each levels as l}
            <path d="M{l.x} {l.y + 0.5}H1748" class="level" />
            <text class="level-text" x="1732" y={l.y - 4}>{l.text}</text>
          {/each}
          <path d="M5 262.500H1745" class="tracker" />
          <text class="level-text pd" x="1732" y="258">PD VH ($124.66)</text>
          <text class="level-text poc" x="1732" y="291">PD POC ($123.76)</text>
          <text class="level-text pd" x="1732" y="330">PD VL ($122.67)</text>
          <path d="M1610 261.500H1741" stroke="#70b8f0" stroke-dasharray="21 7" />
          <path d="M1604 294.500H1748" stroke="#e8c000" stroke-dasharray="21 7" />
          <path d="M1594 333.500H1748" stroke="#70b8f0" stroke-dasharray="21 7" />
          <path d="M1637 255.500H1748" stroke="#00ffff" />
          <path d="M1597 384.500H1748" stroke="#ff4800" />
          {@render split(153, 1126)}
          <path d="M1748.500 62V1143" class="ruler" />
          <path d="M5 1142.500H1749" stroke="#666" />
          {#each range(130, 101, 1) as p}
            <text class="axis" x="1751" y={mainY(p) + 4}>{p}</text>
          {/each}
          {@render tag(1751, 261, '124.63', '#ff00ff', '#fff')}
          {@render tag(1751, 296, '123.66', '#e8c000', '#111')}
          {@render tag(1751, 332, '122.69', '#5f8fe8', '#111')}
          {@render tag(1751, 383, '121.26', '#ff4800', '#fff')}
        </svg>
        <div class="chips">
          <span>POC: 123.66</span><span class="bad">VH: 124.71</span><span>VL: 122.69</span><span>POC:PD 122.69</span><span>VH:PD 123.18</span><span>VL:PD 121.58</span>
        </div>
      </div>
      <div class="splitter"></div>
      {@render strip(mainVolume, false)}
      <div class="plot">
        <svg viewBox="2 1169 1813 84" shape-rendering="crispEdges">
          {#each dayPct as p, n}
            {@const x = Math.max(mainX(n + FIRST_MAIN), 5)}
            <rect {x} y={Math.min(pctY(p), 1211)} width={mainX(n + FIRST_MAIN + 1) - x} height={Math.abs(pctY(p) - 1211)} fill={p > 50 ? '#062609' : '#2c0508'} />
          {/each}
          <path d={volumeBars(mainX, 3.56, 1253, 3.3, (k) => k.vol, FIRST_MAIN)} stroke="#006400" />
          <path d={volumeBars(mainX, 3.56, 1253, 3.3, (k) => k.red, FIRST_MAIN)} stroke="#ff0000" />
          <path d={volumeBars(mainX, 3.56, 1253, 1, () => 3, FIRST_MAIN)} stroke="#0b5a7d" />
          <polyline points={averageLine(greenVol, 12, mainX, 3.56, 1251, 5)} stroke="#00c832" class="line" />
          <polyline points={averageLine(redVol, 12, mainX, 3.56, 1251, 5)} stroke="#ff6060" class="line" />
          <polyline points={averageLine(allVol, 50, mainX, 3.56, 1249, 4.6)} stroke="#f8e6a0" class="line" />
          <path d="M5 1211.500H1748" stroke="#ff7a90" />
          <polyline points={pctLine} stroke="#00ffff" class="line" />
          <rect x="1749" y="1169" width="66" height="84" fill="#0a0a0a" />
          <rect x="2" y="1169" width="3" height="84" fill="#0a0a0a" />
          <path d="M1748.500 1169V1253" class="ruler" />
          <path d="M5 1252.500H1749" stroke="#666" />
          <text class="axis" x="1751" y="1193">20</text>
          <text class="axis" x="1751" y="1226">10</text>
          <text class="axis" x="1751" y="1258">0</text>
          {@render millions(1810, 1241)}
        </svg>
        <div class="chips flush">
          <span>BuyVol 56,548,310.88</span><span class="bad">SellVol 3,691,581.12</span><span>Buy % 93.88</span><span class="bad">Sell % 6.13</span>
        </div>
      </div>
      <div class="splitter"></div>
      {@render strip(rsiHeader, false)}
      <div class="plot">
        <svg viewBox="2 1279 1813 144">
          <g shape-rendering="crispEdges">
            <path d="M5 1304.500H1748M5 1367.500H1748" stroke="#f8e6a0" />
            <path d="M1748.500 1279V1406" class="ruler" />
            <path d="M5 1406.500H1749" stroke="#666" />
          </g>
          {#each rsiPaths as r}
            <path d={r.d} stroke={r.color} />
          {/each}
          {#each range(80, 20, 20) as v}
            <text class="axis" x="1751" y={rsiY(v) + 4}>{v}</text>
          {/each}
          {@render tag(1751, 1304, '69.4157', '#808080', '#fff')}
          {@render tag(1751, 1366, '30', '#f8e6a0', '#111')}
          {#each mainDates as [label, x]}
            <text class="axis" {x} y="1419">{label}</text>
          {/each}
        </svg>
      </div>
      {@render scrollbar('POCs', 52.4, 35.4, true, false)}
    </section>

    <div class="side">
      <section class="panel">
        {@render toolbar(false, '30m')}
        {@render strip(sideHeader, true)}
        <div class="plot">
          <svg viewBox="1820 62 738 308" shape-rendering="crispEdges">
            {@render alert(1832, 71)}
            {@render logo(1832, 91)}
            {@render expiry(1911, 62, 370, '5/20/22', 350)}
            {@render expiry(2156, 62, 370, '6/17/22', 350)}
            {@render expiry(2387, 62, 370, '7/15/22', 350)}
            {#each sideDays as d}
              {@render valueArea(`d${d.i}`, d.x, 13, dayY, d)}
              <path d={profile(d.candles, d.x, 12, dayY, 2, 0.5, 0.8)} fill="#686868" />
              <path d="M{d.x} {dayY(d.vh)}h13M{d.x} {dayY(d.vl)}h13" stroke="#5f8fe8" />
              <path d="M{d.x} {dayY(d.poc)}h13" stroke="#e8c000" />
            {/each}
            <path d="M1824 121.500H2490" class="tracker wide" />
            {@render split(2026, 353)}
            <path d="M2114 328l4 10h8z" fill="#ddd" />
            <rect x="2110" y="337" width="69" height="17" rx="4" fill="#e0e0e0" shape-rendering="auto" />
            <text class="tip-text" x="2116" y="350">Lo: 102.24</text>
            <path d="M2491.500 62V370" class="ruler" />
            <path d="M1822 369.500H2492M1822.500 62V370" stroke="#666" />
            {#each range(130, 100, 2.5) as p}
              <text class="axis" x="2494" y={dayY(p) + 4}>{p}</text>
            {/each}
            <text class="axis ghost" x="2497" y="124">124.63</text>
            {@render tag(2494, 138, '122.69', '#5f8fe8', '#111')}
          </svg>
        </div>
        <div class="splitter"></div>
        {@render strip([['Volume', 'white'], ['4,400,324', '']], false)}
        <div class="plot">
          <svg viewBox="1820 396 738 77">
            <g shape-rendering="crispEdges">
              <path d={volumeBars(sideX, 0.99, 456, 2.75, (k) => k.vol)} stroke="#0b5a7d" />
              <path d="M2491.500 396V456" class="ruler" />
              <path d="M1822 456.500H2492M1822.500 396V456" stroke="#666" />
            </g>
            <text class="axis" x="2494" y="404">20</text>
            <text class="axis" x="2494" y="432">10</text>
            <text class="axis" x="2494" y="460">0</text>
            <rect x="2492" y="457" width="20" height="16" fill="#0a0a0a" />
            {@render millions(2554, 455)}
            {#each sideDates as [label, x]}
              <text class="axis mid" {x} y="469">{label}</text>
            {/each}
          </svg>
        </div>
        {@render scrollbar('Default', 46.4, 53.6, false, true)}
      </section>

      <section class="panel">
        {@render toolbar(false, '30m')}
        {@render strip(sideHeader, true)}
        <div class="plot">
          <svg viewBox="1820 534 738 308" shape-rendering="crispEdges">
            {@render alert(1832, 543)}
            {@render logo(1832, 563)}
            {@render expiry(1911, 534, 842, '5/20/22', 822)}
            {@render expiry(2156, 534, 842, '6/17/22', 822)}
            {@render expiry(2387, 534, 842, '7/15/22', 822)}
            {#each weeks as w, n}
              {@const x = sideX(w.from)}
              {@const width = sideX(w.to) - x}
              {@render valueArea(`w${n}`, x, width, weekY, w)}
              <path d={profile(flat.slice(w.from * 13, w.to * 13), x, width * 0.85, weekY, 2, 0.5, 1)} fill="#808080" fill-opacity="0.3" />
              <path d="M{x} {weekY(w.vh)}h{width}M{x} {weekY(w.vl)}h{width}" stroke="#5f8fe8" />
            {/each}
            {#each weekCandles as k}
              <path d={k.d} stroke={k.color} shape-rendering="auto" />
            {/each}
            {#each weeks as w}
              <path d="M{sideX(w.from)} {weekY(w.poc)}H{sideX(w.to)}" stroke="#e8c000" />
            {/each}
            <path d="M1824 595.500H2490" class="tracker wide" />
            <path d="M2439 593.500H2489" stroke="#00ffff" />
            <path d="M2427 629.500H2489" stroke="#ff4800" />
            {@render split(2026, 825)}
            <path d="M1926 832l2 7h6z" fill="#ddd" />
            <rect x="1921" y="839" width="67" height="10" rx="4" fill="#e0e0e0" />
            <path d="M2491.500 534V842" class="ruler" />
            <path d="M1822 841.500H2492M1822.500 534V842" stroke="#666" />
            {#each range(130, 102.5, 2.5) as p}
              <text class="axis" x="2494" y={weekY(p) + 4}>{p}</text>
            {/each}
            {@render tag(2494, 594, '124.63', '#ff00ff', '#fff')}
            {@render tag(2494, 613, '122.76', '#e8c000', '#111')}
            {@render tag(2494, 628, '121.26', '#ff4800', '#fff')}
            {@render tag(2494, 672, '116.91', '#5f8fe8', '#111')}
          </svg>
          <div class="chips side-chips">
            <span>POC: 122.76</span><span class="bad">VH: 124.92</span><span>VL: 116.91</span><span>POC:PW 110.38</span><span>VH:PW 113.58</span><span>VL:PW 109.05</span>
          </div>
        </div>
        <div class="splitter"></div>
        {@render strip([['Volume', 'white'], ['4,400,324', ''], [axe, 'red'], ['...', 'more']], false)}
        <div class="plot">
          <svg viewBox="1820 868 738 77">
            <g shape-rendering="crispEdges">
              {#each weeks as w}
                {@const x = sideX(w.from)}
                <rect {x} y={Math.min(weekPctY(w.pct), 899)} width={(w.to === 48 ? 2452 : sideX(w.to)) - x} height={Math.abs(weekPctY(w.pct) - 899)} fill={w.pct > 50 ? '#062609' : '#2c0508'} />
              {/each}
              <path d={volumeBars(sideX, 0.99, 928, 2.7, (k) => k.vol)} stroke="#006400" />
              <path d={volumeBars(sideX, 0.99, 928, 2.7, (k) => k.red)} stroke="#ff0000" />
              <polyline points={averageLine(allVol, 50, sideX, 0.99, 926, 3.4)} stroke="#f8e6a0" class="line" />
              <path d="M1824 899.500H2489" stroke="#ff7a90" />
              <polyline points={weekPctLine} stroke="#00ffff" class="line" />
              <path d="M2491.500 868V928" class="ruler" />
              <path d="M1822 928.500H2492M1822.500 868V928" stroke="#666" />
            </g>
            <text class="axis" x="2494" y="891">20</text>
            <text class="axis" x="2494" y="912">10</text>
            <text class="axis" x="2494" y="932">0</text>
            <rect x="2492" y="929" width="20" height="16" fill="#0a0a0a" />
            {@render millions(2554, 927)}
            {#each sideDates as [label, x]}
              <text class="axis mid" {x} y="941">{label}</text>
            {/each}
          </svg>
          <div class="chips side-flush">
            <span>BuyVol 246,882,478.68</span><span class="bad">SellVol 4,731,197.32</span><span>Buy % 98.12</span><span class="bad">Sell % 1.89</span>
          </div>
        </div>
        {@render scrollbar('Default', 46.4, 53.6, false, true)}
      </section>

      <section class="panel">
        {@render toolbar(false, 'D')}
        {@render strip(dailyHeader, true)}
        <div class="plot">
          <svg viewBox="1820 1006 738 314" shape-rendering="crispEdges">
            <rect x="1822" y="1006" width="670" height="314" fill="#000" />
            {@render logo(1832, 1035)}
            {#each daily as k}
              <path d="M{k.x + 0.5} {k.h}V{k.top}M{k.x + 0.5} {k.bottom}V{k.l}" stroke={k.color} />
              {#if k.c >= k.o}
                <rect x={k.x - 0.5} y={k.top + 0.5} width="3" height={k.bottom - k.top} fill="#000" stroke={k.color} />
              {:else}
                <rect x={k.x - 1} y={k.top} width="4" height={k.bottom - k.top} fill={k.color} />
              {/if}
            {/each}
            <polyline points={fastAverage} stroke="#7a420a" class="line" shape-rendering="auto" />
            <polyline points={slowAverage} stroke="#943a9a" class="line" shape-rendering="auto" />
            <path d="M1823 1201.500H2367" class="tracker wide" />
            <path d="M2367 1201.500H2487" stroke="#00ffff" />
            <path d="M2215 1279.500H2487" stroke="#ff4800" />
            <text class="event" x="2022" y="1285">$-7.56</text>
            {#each [2024, 2395] as x}
              <g shape-rendering="auto">
                <circle cx={x} cy="1294" r="7" fill="#f05050" />
                <path d="M{x - 4} 1292q4-4 8 0M{x - 3} 1298v-3l2-2h2l2 2v3z" fill="none" stroke="#111" stroke-width="1.500" />
                <circle cx={x} cy="1310" r="7" fill="#2080e8" />
                <path d="M{x - 1} 1311c-3-2-2-6 1-6s4 4 1 6v2h-2zM{x - 1} 1315h2" fill="none" stroke="#111" stroke-width="1.300" />
              </g>
            {/each}
            {@render split(2180, 1303)}
            <path d="M2491.500 1006V1320" class="ruler" />
            <path d="M1822 1319.500H2492M1822.500 1006V1320" stroke="#666" />
            {#each range(180, 90, 10) as p}
              <text class="axis" x="2494" y={dailyY(p) + 4}>{p}</text>
            {/each}
            {@render tag(2494, 1200, '124.63', '#ff00ff', '#fff')}
            {@render tag(2494, 1234, '114.69', '#7a4206', '#1a1a1a')}
            {@render tag(2494, 1278, '101.43', '#ff4800', '#fff')}
          </svg>
        </div>
        <div class="splitter"></div>
        {@render strip([['Volume', 'white'], ['60,239,892', ''], [axe, 'red'], ['...', 'more']], false)}
        <div class="plot">
          <svg viewBox="1820 1346 738 77">
            <g shape-rendering="crispEdges">
              <rect x="1822" y="1346" width="670" height="60" fill="#000" />
              {#each daily as k}
                <rect x={k.x - 2} y={1406 - k.vol} width="4" height={k.vol} fill="#006400" />
                <rect x={k.x - 2} y={1406 - k.red} width="4" height={k.red} fill="#ff0000" />
              {/each}
              <polyline points="1823,1398 1880,1393 1930,1396 1975,1399 2020,1399 2060,1393 2100,1390 2160,1391 2210,1394 2260,1396 2310,1394 2367,1399" stroke="#00a028" class="line" />
              <polyline points="1823,1396 1870,1399 1920,1392 1970,1397 2010,1400 2050,1396 2100,1388 2150,1392 2200,1388 2260,1392 2310,1398 2367,1397" stroke="#e07070" class="line" />
              <polyline points="1823,1388 1900,1387 1950,1389 2000,1391 2040,1391 2100,1388 2150,1387 2200,1386 2260,1385 2300,1384 2330,1385 2367,1387" stroke="#f8e6a0" class="line" />
              <path d="M2491.500 1346V1406" class="ruler" />
              <path d="M1822 1406.500H2492M1822.500 1346V1406" stroke="#666" />
            </g>
            <text class="axis" x="2494" y="1367">200</text>
            <text class="axis" x="2494" y="1389">100</text>
            <text class="axis" x="2494" y="1410">0</text>
            <rect x="2492" y="1407" width="20" height="16" fill="#0a0a0a" />
            {@render millions(2554, 1405)}
            {#each dailyDates as [label, x]}
              <text class="axis mid" {x} y="1419">{label}</text>
            {/each}
          </svg>
        </div>
        {@render scrollbar('Default', 86, 14, false, false)}
      </section>
    </div>
  </div>
</main>

<style>
  :global(body) {
    margin: 0;
    background: #0a0a0a;
  }

  .desk {
    font-family: 'Open Sans', 'Noto Sans', sans-serif;
    font-size: 12px;
    color: #a0a0a0;
    background: #0a0a0a;
    border-bottom: 2px solid #444;
  }

  button, select {
    font: inherit;
    color: inherit;
    background: none;
    border: 0;
    margin: 0;
    padding: 0;
  }

  svg { display: block; }
  .icon { flex: none; }
  .grow { flex: 1; }

  .topbar {
    display: flex;
    align-items: center;
    height: 20px;
    background: #4b4b4b;
    color: #eee;
  }

  .layout {
    display: flex;
    align-items: center;
    gap: 4px;
    height: 15px;
    margin-left: 5px;
    padding: 0 6px;
    border-radius: 4px;
    background: #0c0c0c;
  }

  .layout .icon {
    width: 12px;
    height: 10px;
  }

  .workspace {
    height: 20px;
    padding: 0 3px;
    border-left: 1px solid #666;
  }

  .top-icon {
    display: grid;
    place-items: center;
    box-sizing: border-box;
    width: 31px;
    height: 20px;
    border-left: 1px solid #666;
  }

  .top-icon .icon {
    width: 10px;
    height: 10px;
  }

  .columns {
    display: grid;
    grid-template-columns: minmax(0, 1817fr) minmax(0, 742fr);
    gap: 1px;
  }

  .panel {
    min-width: 0;
    border: 0 solid #333;
    border-width: 0 2px;
  }

  .panel.main { border-color: #063a55; }

  .side .panel + .panel {
    border-top: 1px solid #444;
    margin-top: 3px;
  }

  .toolbar {
    display: flex;
    align-items: center;
    height: 23px;
    background: #4b4b4b;
    color: #ddd;
  }

  .toolbar.active { background: #003d5c; }

  .symbol {
    display: flex;
    flex: none;
    width: 102px;
    height: 16px;
    margin-left: 2px;
    border: 1px solid #666;
    background: #0a0a0a;
  }

  .symbol select {
    flex: 1;
    appearance: none;
    padding-left: 6px;
    line-height: 16px;
    color: #eee;
  }

  .arrow {
    display: grid;
    place-items: center;
    width: 17px;
    background: #4b4b4b;
    color: #999;
    font-size: 7px;
  }

  .cell {
    position: relative;
    display: flex;
    flex: none;
    align-items: center;
    justify-content: center;
    box-sizing: border-box;
    height: 20px;
    border-left: 1px solid rgba(255, 255, 255, 0.14);
  }

  .cell .icon {
    width: 12px;
    height: 12px;
  }

  .filler { flex: 1; }

  .corner { position: relative; }

  .corner::after {
    content: '';
    position: absolute;
    right: 1px;
    bottom: 1px;
    border: 2px solid transparent;
    border-right-color: #ddd;
    border-bottom-color: #ddd;
  }

  .badge {
    width: 14px;
    border-left: 0;
  }

  .badge span {
    width: 8px;
    line-height: 11px;
    border-radius: 2px;
    background: #f08010;
    color: #222;
    font-size: 10px;
    text-align: center;
  }

  .company {
    width: 152px;
    color: #8fa6b2;
  }

  .last {
    width: 61px;
    font-size: 15px;
    font-weight: 600;
  }

  .pair {
    flex-direction: column;
    align-items: flex-start;
    padding-left: 7px;
    font-size: 10px;
    line-height: 9px;
  }

  .gain { width: 47px; color: #10b040; }
  .bid { width: 58px; }
  .small { width: 31px; }
  .small.share { gap: 3px; width: 65px; }
  .small.drawings { gap: 3px; width: 85px; }
  .period { width: 36px; font-size: 9px; font-weight: 600; }
  .style { width: 60px; gap: 3px; }
  .studies { width: 74px; gap: 3px; }
  .patterns { width: 96px; gap: 3px; padding-right: 16px; }
  .patterns.narrow { width: 84px; padding-right: 8px; }

  .strip-row {
    display: flex;
    height: 19px;
  }

  .strip {
    display: flex;
    flex: 1;
    min-width: 0;
    box-sizing: border-box;
    margin-left: 2px;
    border: 1px solid #666;
    overflow: hidden;
    line-height: 17px;
    white-space: nowrap;
  }

  .strip-axis {
    flex: none;
    width: 66px;
    padding: 2px 0 0 4px;
    box-sizing: border-box;
    color: #ccc;
  }

  .strip-axis .icon { width: 12px; height: 12px; }

  .field {
    flex: none;
    padding: 0 5px 0 3px;
    border-right: 1px solid #666;
  }

  .title { color: #fff; font-weight: 700; }
  .mint { color: #98f0c0; }
  .orange { color: #ff4800; }
  .cyan { color: #00e8e8; }
  .gold { color: #e8c000; }
  .blue { color: #5f8fe8; }
  .white { color: #fff; }
  .red { color: #f01010; }
  .green { color: #00c832; }
  .cream { color: #f8e6a0; }
  .coral { color: #ff6060; }
  .pink { color: #ff7a90; }
  .dim { color: #808080; }

  .more {
    padding: 0 2px;
    border: 0;
  }

  .plot { position: relative; }
  .plot svg { width: 100%; height: auto; }

  .main .plot {
    background: linear-gradient(90deg, transparent 2px, #666 2px, #666 3px, transparent 3px);
  }

  .chips {
    position: absolute;
    top: 3px;
    left: 20px;
    display: flex;
    gap: 2px;
    color: #062006;
    font-weight: 600;
    line-height: 17px;
    white-space: nowrap;
  }

  .chips.flush { left: 5px; }
  .chips.side-flush { left: 6px; }

  .chips span {
    padding: 0 2px;
    background: #00ff00;
  }

  .chips .bad { background: #ff0000; color: #300; }

  .splitter {
    height: 5px;
    margin: 1px 66px 1px 3px;
    background: #303030;
  }

  .scroll-row {
    display: flex;
    align-items: flex-start;
    height: 15px;
  }

  .track {
    position: relative;
    display: flex;
    flex: 1;
    height: 13px;
    margin-left: 3px;
    background: #161616;
  }

  .tip {
    position: absolute;
    left: 0;
    font-size: 8px;
    line-height: 12px;
  }

  .thumb {
    box-sizing: border-box;
    background: #444;
    color: #777;
    font-size: 7px;
    line-height: 12px;
    text-align: center;
  }

  .dock {
    position: absolute;
    left: 72px;
    bottom: -2px;
    width: 31px;
    height: 17px;
    border: 1px solid #666;
    background: #4b4b4b;
    color: #eee;
    font-size: 9px;
    line-height: 14px;
  }

  .steps {
    display: flex;
    gap: 6px;
    width: 26px;
    font-size: 8px;
    background: #161616;
    line-height: 13px;
  }

  .tools {
    display: flex;
    width: 81px;
    margin-left: 2px;
    justify-content: space-between;
    color: #ddd;
  }

  .tools .icon { width: 13px; height: 13px; }
  .tools .dimmed { opacity: 0.2; }

  .set {
    width: 124px;
    height: 15px;
    padding-left: 8px;
    color: #eee;
    font-size: 11px;
    line-height: 13px;
    text-align: left;
    white-space: nowrap;
  }

  .set.poc { width: 116px; }

  .axis, .tag {
    fill: #969696;
    font-size: 12px;
    font-weight: 600;
  }

  .tag { font-weight: 400; }
  .axis.mid { text-anchor: middle; }
  .axis.ghost { fill: #2a2a2a; }

  .line { fill: none; }

  .ruler {
    stroke: #777;
    stroke-dasharray: 5 3;
  }

  .level {
    stroke: #ff4040;
    stroke-dasharray: 21 7;
  }

  .level-text {
    fill: #f04040;
    font-size: 12px;
    font-weight: 600;
    text-anchor: end;
  }

  .level-text.pd { fill: #70b8e8; }
  .level-text.poc { fill: #e8c000; }

  .tracker {
    stroke: #98f0c0;
    stroke-dasharray: 5 8;
  }

  .tracker.wide { stroke-dasharray: 6 6; }

  .expiry {
    stroke: #a01818;
    stroke-dasharray: 15 6;
  }

  .expiry-date {
    fill: #a01414;
    font-family: 'DejaVu Sans Mono', monospace;
    font-size: 11px;
  }

  .event {
    fill: #00c832;
    font-family: 'DejaVu Sans Mono', monospace;
    font-size: 10px;
    font-weight: 700;
    text-anchor: middle;
  }

  .millions {
    fill: #b0b0b0;
    font-family: 'DejaVu Sans Mono', monospace;
    font-size: 10px;
    font-weight: 700;
  }

  .tip-text {
    fill: #222;
    font-size: 12px;
  }

  .logo text { fill: #555; }
  .logo path { fill: none; stroke: #2c2c2c; stroke-width: 2; }
  .heavy { font-size: 17px; font-weight: 700; }
  .thin { font-size: 15px; font-weight: 300; }
</style>
